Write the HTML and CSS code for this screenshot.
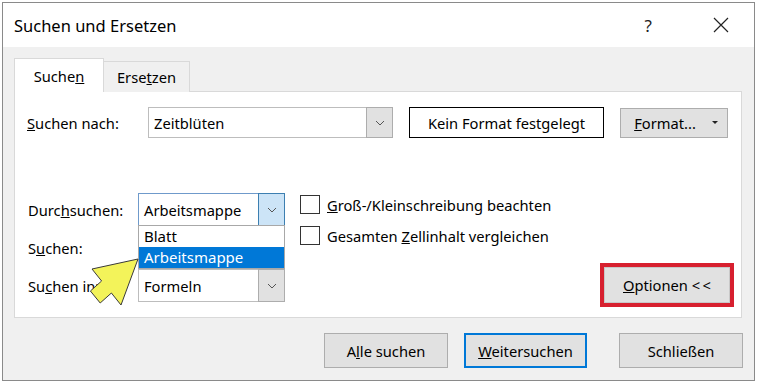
FILE: index.html
```html
<!DOCTYPE html>
<html lang="de">

<head>
    <meta charset="UTF-8">
    <meta name="viewport" content="width=device-width, initial-scale=1.0">
    <title>Suchen und Ersetzen</title>
    <link rel="stylesheet" href="styles.css">
</head>

<body>
<div class="dialog">
    <!-- Title bar -->
    <div class="titlebar">
        <span class="title">Suchen und Ersetzen</span>
        <span class="help">?</span>
        <span class="close">
            <svg width="16" height="16" viewBox="0 0 16 16"><path d="M1 1 L15 15 M15 1 L1 15" stroke="#222" stroke-width="1.2" fill="none"/></svg>
        </span>
    </div>

    <div class="dialog-body">
        <!-- Tabs -->
        <div class="tabs">
            <div class="tab active">Suche<u>n</u></div>
            <div class="tab">Erse<u>t</u>zen</div>
        </div>

        <div class="panel">
            <!-- Search term -->
            <div class="find-row">
                <label class="find-label"><u>S</u>uchen nach:</label>
                <div class="combo combo-find">
                    <span class="combo-text">Zeitblüten</span>
                    <span class="combo-btn">
                        <svg width="10" height="6" viewBox="0 0 10 6"><polyline points="1,1 5,5 9,1" stroke="#555" fill="none"/></svg>
                    </span>
                </div>
                <div class="format-box">Kein Format festgelegt</div>
                <button class="btn btn-format"><u>F</u>ormat...<span class="caret"></span></button>
            </div>

            <!-- Options -->
            <div class="options">
                <div class="opt-grid">
                    <label class="opt-label">Durc<u>h</u>suchen:</label>
                    <div class="combo combo-open">
                        <span class="combo-text">Arbeitsmappe</span>
                        <span class="combo-btn">
                            <svg width="10" height="6" viewBox="0 0 10 6"><polyline points="1,1 5,5 9,1" stroke="#555" fill="none"/></svg>
                        </span>
                        <div class="dropdown-list">
                            <div class="dropdown-item">Blatt</div>
                            <div class="dropdown-item selected">Arbeitsmappe</div>
                        </div>
                    </div>

                    <label class="opt-label">S<u>u</u>chen:</label>
                    <!-- covered by the open list above -->
                    <div class="combo">
                        <span class="combo-text"></span>
                        <span class="combo-btn"></span>
                    </div>

                    <label class="opt-label">Su<u>c</u>hen in:</label>
                    <div class="combo">
                        <span class="combo-text">Formeln</span>
                        <span class="combo-btn">
                            <svg width="10" height="6" viewBox="0 0 10 6"><polyline points="1,1 5,5 9,1" stroke="#555" fill="none"/></svg>
                        </span>
                    </div>
                </div>

                <div class="checks">
                    <label class="check"><span class="box"></span><span><u>G</u>roß-/Kleinschreibung beachten</span></label>
                    <label class="check"><span class="box"></span><span>Gesamten <u>Z</u>ellinhalt vergleichen</span></label>
                </div>

                <div class="highlight">
                    <button class="btn btn-options"><u>O</u>ptionen &lt;&thinsp;&lt;</button>
                </div>
            </div>
        </div>

        <!-- Dialog buttons -->
        <div class="actions">
            <button class="btn btn-action">A<u>l</u>le suchen</button>
            <button class="btn btn-action btn-default"><u>W</u>eitersuchen</button>
            <button class="btn btn-action btn-close">Schließen</button>
        </div>
    </div>
</div>

<!-- Yellow pointer annotation -->
<svg class="pointer" width="56" height="54" viewBox="0 0 56 54">
    <polygon points="52,4 6,14 15.6,26 4.4,36 14.2,48 25.4,38 35,50" fill="#f3f35a" stroke="#3a3a3a" stroke-width="1" stroke-linejoin="round"/>
</svg>
</body>

</html>
```

FILE: styles.css
```css
* {
    box-sizing: border-box;
}

body {
    margin: 0;
    background: #ffffff;
    font-family: 'Noto Sans', 'Open Sans', sans-serif;
    font-size: 14.7px;
    color: #000;
    position: relative;
}

.dialog {
    width: 753px;
    height: 379px;
    margin: 2px 0 0 2px;
    border: 1px solid #8a8a8a;
    display: flex;
    flex-direction: column;
    background: #f0f0f0;
}

/* Title bar */
.titlebar {
    height: 44px;
    background: #ffffff;
    display: flex;
    align-items: center;
    padding-left: 11px;
}

.title {
    font-size: 16.5px;
    flex: 1;
}

.help {
    font-size: 17px;
    color: #222;
    margin-right: 61px;
}

.close {
    display: flex;
    margin-right: 25px;
}

/* Body */
.dialog-body {
    flex: 1;
    padding: 11px 12px 0 11px;
}

.tabs {
    display: flex;
    align-items: flex-end;
    margin-bottom: -1px;
    position: relative;
    z-index: 1;
}

.tab {
    height: 31px;
    width: 86px;
    border: 1px solid #d9d9d9;
    border-left: none;
    border-bottom: none;
    background: #f0f0f0;
    text-align: center;
    padding-top: 5px;
}

.tab.active {
    height: 34px;
    width: 90px;
    background: #ffffff;
    border-left: 1px solid #d9d9d9;
    padding-top: 7px;
}

.panel {
    height: 227px;
    background: #ffffff;
    border: 1px solid #d9d9d9;
    padding: 15px 13px 0 12px;
}

.find-row {
    display: flex;
    align-items: center;
    height: 31px;
}

.find-label {
    width: 121px;
}

/* Combo boxes */
.combo {
    position: relative;
    display: flex;
    height: 33px;
    border: 1px solid #bdbdbd;
    background: #ffffff;
}

.combo-find {
    width: 245px;
    height: 31px;
}

.combo-text {
    flex: 1;
    padding-left: 5px;
    display: flex;
    align-items: center;
    white-space: nowrap;
    overflow: hidden;
}

.combo-btn {
    width: 27px;
    margin: -1px -1px -1px 0;
    background: #e1e1e1;
    border: 1px solid #adadad;
    display: flex;
    align-items: center;
    justify-content: center;
}

.combo-open {
    border-color: #6f9acb;
}

.combo-open .combo-btn {
    background: #cce4f7;
    border-color: #3c7fb1;
}

.dropdown-list {
    position: absolute;
    top: 31px;
    left: -1px;
    right: -1px;
    background: #ffffff;
    border: 1px solid #a8a8a8;
    z-index: 2;
}

.dropdown-item {
    height: 21px;
    line-height: 21px;
    padding-left: 5px;
    font-size: 15px;
}

.dropdown-item.selected {
    background: #0078d7;
    color: #ffffff;
}

.format-box {
    width: 195px;
    height: 31px;
    margin-left: 16px;
    border: 1.5px solid #000;
    display: flex;
    align-items: center;
    justify-content: center;
}

/* Buttons */
.btn {
    font-family: inherit;
    font-size: 14.7px;
    color: #000;
    background: #e1e1e1;
    border: 1px solid #adadad;
    padding: 0;
}

.btn-format {
    width: 108px;
    height: 30px;
    margin-left: 16px;
    display: flex;
    align-items: center;
    justify-content: center;
    padding-left: 4px;
}

.caret {
    width: 0;
    height: 0;
    margin-left: 16px;
    border-left: 3px solid transparent;
    border-right: 3px solid transparent;
    border-top: 3px solid #222;
}

.options {
    display: flex;
    margin-top: 55px;
}

.opt-grid {
    display: grid;
    grid-template-columns: 110px 147px;
    grid-auto-rows: 33px;
    row-gap: 5px;
    align-items: center;
    margin-left: 1px;
}

.checks {
    display: flex;
    flex-direction: column;
    gap: 12px;
    margin-left: 15px;
    padding-top: 2px;
}

.check {
    display: flex;
    align-items: center;
    height: 19px;
}

.box {
    width: 20px;
    height: 19px;
    border: 1px solid #333;
    background: #ffffff;
    margin-right: 7px;
}

.highlight {
    margin-left: auto;
    margin-right: -6px;
    margin-bottom: -5px;
    align-self: flex-end;
    border: 4px solid #d7202f;
}

.btn-options {
    display: block;
    width: 126px;
    height: 36px;
    border-color: #c8c8c8;
}

.actions {
    display: flex;
    justify-content: flex-end;
    margin-top: 15px;
    margin-right: -1px;
}

.btn-action {
    width: 124px;
    height: 35px;
}

.btn-default {
    width: 123px;
    margin-left: 16px;
    border: 2px solid #0078d7;
}

.btn-close {
    margin-left: 32px;
}

/* Annotation arrow */
.pointer {
    position: absolute;
    left: 86px;
    top: 255px;
    z-index: 3;
}
```
